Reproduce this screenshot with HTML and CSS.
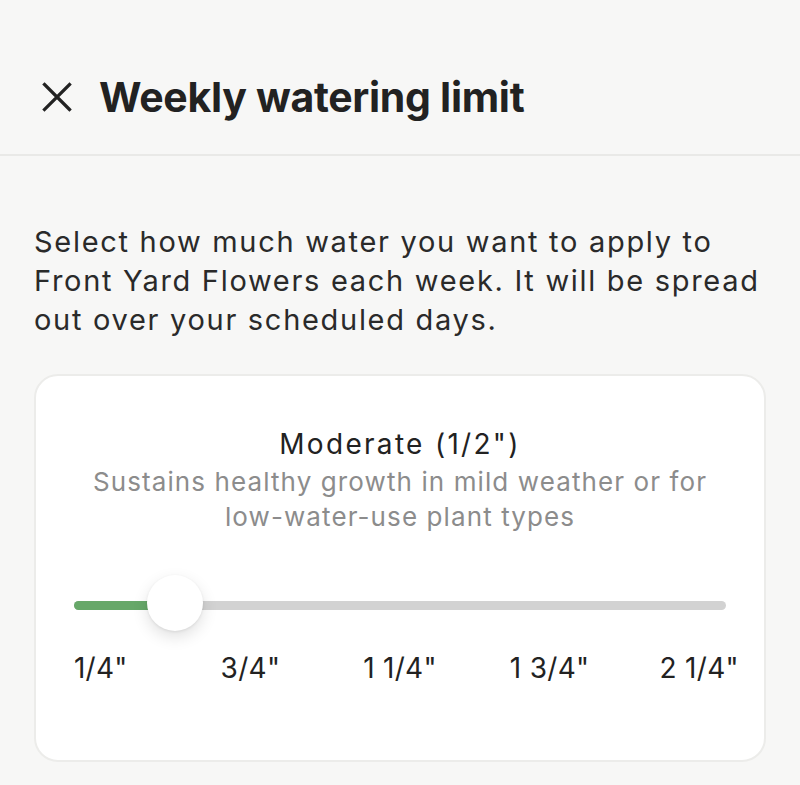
FILE: index.html
```html
<!DOCTYPE html>
<html lang="en">
<head>
	<meta charset="UTF-8" />
	<title>Weekly watering limit</title>
	<link rel="stylesheet" href="styles.css">
</head>
<body>
	<!-- header -->
	<div class="header">
		<svg class="close" viewBox="0 0 30 30" width="30" height="30">
			<path d="M2.5 2.5L27.5 27.5M27.5 2.5L2.5 27.5" stroke="#222" stroke-width="3.2" stroke-linecap="square" fill="none"/>
		</svg>
		<h1>Weekly watering limit</h1>
	</div>

	<div class="content">
		<p class="intro">Select how much water you want to apply to Front Yard Flowers each week. It will be spread out over your scheduled days.</p>

		<div class="card">
			<p class="level">Moderate (1/2")</p>
			<p class="desc">Sustains healthy growth in mild weather or for <span class="nowrap">low-water-use</span> plant types</p>

			<div class="slider">
				<div class="track">
					<div class="fill" style="width:90px"></div>
				</div>
				<div class="thumb"></div>
			</div>
			<ul class="ticks">
				<li>1/4"</li>
				<li>3/4"</li>
				<li>1 1/4"</li>
				<li>1 3/4"</li>
				<li>2 1/4"</li>
			</ul>
		</div>
	</div>
</body>
</html>
```
FILE: styles.css
```css
*{
	margin:0;
	padding:0;
	box-sizing:border-box;
}
li{
	list-style:none;
}
body{
	background:#f7f7f6;
	font-family:Inter,"Noto Sans",sans-serif;
	color:#222;
}
.header{
	display:flex;
	align-items:center;
	height:156px;
	padding:40px 0 0 42px;
	border-bottom:2px solid #e9e9e7;
}
.header .close{
	display:block;
	margin-right:27px;
}
.header h1{
	font-size:41px;
	font-weight:700;
	letter-spacing:-0.3px;
}
.content{
	padding:66px 34px 0;
}
.intro{
	font-size:29px;
	line-height:39px;
	color:#2a2a2a;
	letter-spacing:1.7px;
}
.card{
	margin-top:35px;
	height:388px;
	background:#fff;
	border:2px solid #ececea;
	border-radius:24px;
	padding:48px 38px 0;
	text-align:center;
}
.level{
	font-size:28px;
	line-height:40px;
	color:#222;
	letter-spacing:2.3px;
}
.desc{
	font-size:26px;
	line-height:35px;
	color:#8c8c8c;
	letter-spacing:1.1px;
}
.nowrap{
	white-space:nowrap;
}
.slider{
	position:relative;
	margin-top:43px;
	height:56px;
	display:flex;
	align-items:center;
}
.track{
	width:100%;
	height:9px;
	border-radius:5px;
	background:#d2d2d2;
	overflow:hidden;
}
.fill{
	height:100%;
	background:#67a869;
}
.thumb{
	position:absolute;
	left:73px;
	top:-2px;
	width:56px;
	height:56px;
	border-radius:50%;
	background:#fff;
	box-shadow:0 6px 16px rgba(0,0,0,0.12),0 1px 3px rgba(0,0,0,0.08);
}
.ticks{
	display:grid;
	grid-template-columns:repeat(5,1fr);
	margin:19px -48px 0;
	font-size:28px;
	line-height:32px;
	color:#222;
	letter-spacing:0.3px;
}
```
